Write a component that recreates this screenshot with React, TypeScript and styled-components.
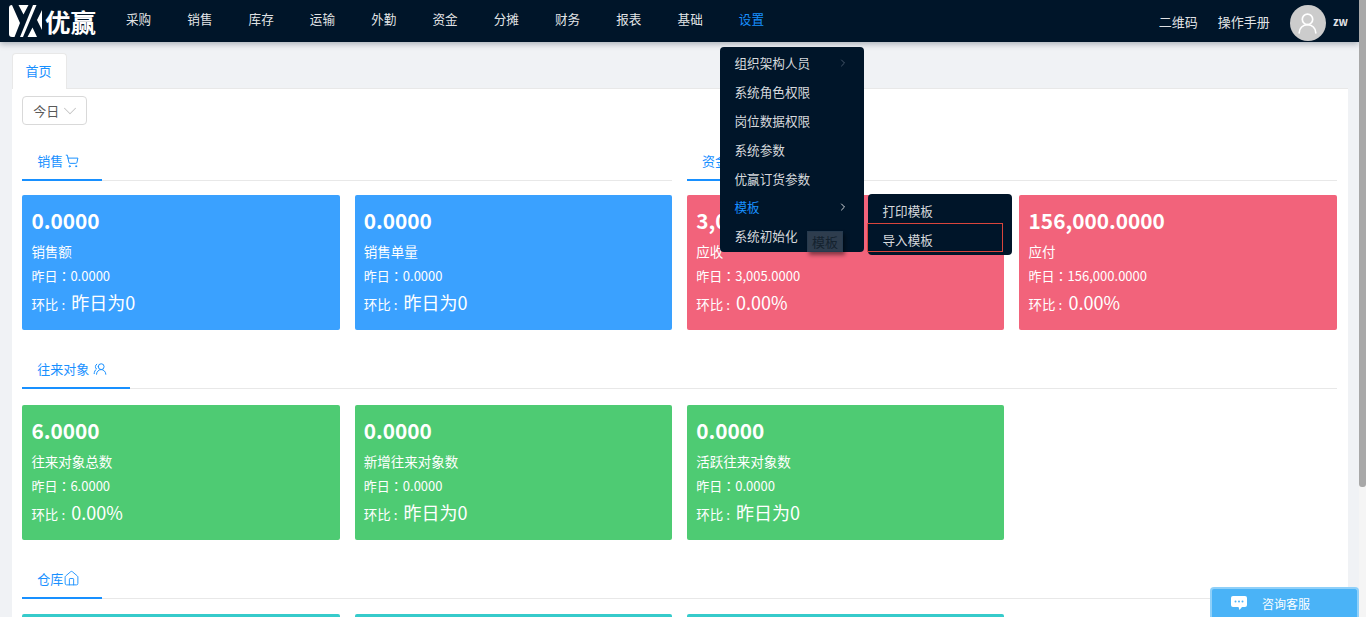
import React from 'react';
import styled, { createGlobalStyle } from 'styled-components';
import { ChevronDown, ChevronRight, House, ShoppingCart, UserRound, UsersRound } from 'lucide-react';

const GlobalStyle = createGlobalStyle`
	html, body, #root {
		margin: 0;
		height: 100%;
		overflow: hidden;
	}
	body {
		font-family: "Noto Sans CJK SC", "Noto Sans", sans-serif;
		font-size: 13px;
		color: #595959;
	}
`;

const navItems = ['采购', '销售', '库存', '运输', '外勤', '资金', '分摊', '财务', '报表', '基础', '设置'];
const menuItems = ['组织架构人员', '系统角色权限', '岗位数据权限', '系统参数', '优赢订货参数', '模板', '系统初始化'];

type Tone = 'blue' | 'red' | 'green' | 'teal';

interface Stat {
	value?: string;
	label?: string;
	yesterday?: string;
	ratio?: string;
}

const salesStats: Stat[] = [
	{ value: '0.0000', label: '销售额', yesterday: '0.0000', ratio: '昨日为0' },
	{ value: '0.0000', label: '销售单量', yesterday: '0.0000', ratio: '昨日为0' },
];
const fundStats: Stat[] = [
	{ value: '3,005.0000', label: '应收', yesterday: '3,005.0000', ratio: '0.00%' },
	{ value: '156,000.0000', label: '应付', yesterday: '156,000.0000', ratio: '0.00%' },
];
const partnerStats: Stat[] = [
	{ value: '6.0000', label: '往来对象总数', yesterday: '6.0000', ratio: '0.00%' },
	{ value: '0.0000', label: '新增往来对象数', yesterday: '0.0000', ratio: '昨日为0' },
	{ value: '0.0000', label: '活跃往来对象数', yesterday: '0.0000', ratio: '昨日为0' },
];
const toneColors: Record<Tone, string> = {
	blue: '#3aa1ff',
	red: '#f2637b',
	green: '#4ecb73',
	teal: '#36cbcb',
};

function StatCard({ stat, tone }: { stat: Stat; tone: Tone }) {
	return (
		<Card $tone={tone}>
			{stat.value && (
				<>
					<CardValue>{stat.value}</CardValue>
					<CardLabel>{stat.label}</CardLabel>
					<CardLine>昨日：{stat.yesterday}</CardLine>
					<CardRatio>
						环比 : <span>{stat.ratio}</span>
					</CardRatio>
				</>
			)}
		</Card>
	);
}

function Section({ title, icon, stats, tone, half }: {
	title: string;
	icon: React.ReactNode;
	stats: Stat[];
	tone: Tone;
	half?: boolean;
}) {
	return (
		<SectionBox $half={half}>
			<SectionHead>
				<SectionTitle>
					{title}
					{icon}
				</SectionTitle>
			</SectionHead>
			<CardGrid $half={half}>
				{stats.map((stat, i) => (
					<StatCard key={i} stat={stat} tone={tone} />
				))}
			</CardGrid>
		</SectionBox>
	);
}

export default function App() {
	return (
		<Shell>
			<GlobalStyle />
			<Page>
				<Header>
					<Logo>
						<svg width="33" height="32" viewBox="0 0 33 32">
							<rect width="33" height="32" rx="3" fill="#fff" />
							<path fill="#001529" d="M3 0h6.500l5 9.500L19.500 0H24L11 32H5.500l5.500-14z" />
							<path fill="#001529" d="M27.500 0H33v5l-5 10 5 10v7h-5l-4.500-9.500L18.500 32H14z" />
						</svg>
						<LogoText>优赢</LogoText>
					</Logo>
					<Nav>
						{navItems.map((item) => (
							<NavItem key={item} $active={item === '设置'}>{item}</NavItem>
						))}
					</Nav>
					<HeaderRight>
						<HeaderLink>二维码</HeaderLink>
						<HeaderLink>操作手册</HeaderLink>
						<Avatar>
							<UserRound size={25} strokeWidth={1.6} color="#fff" />
						</Avatar>
						<UserName>zw</UserName>
					</HeaderRight>
				</Header>

				<Content>
					<TabBar>
						<Tab>首页</Tab>
					</TabBar>
					<Panel>
						<DateSelect>
							今日
							<SelectArrow size={22} strokeWidth={1.1} />
						</DateSelect>
						<Board>
							<Section half title="销售" icon={<ShoppingCart size={14} strokeWidth={1.7} />} stats={salesStats} tone="blue" />
							<Section half title="资金" icon={<ShoppingCart size={14} strokeWidth={1.7} />} stats={fundStats} tone="red" />
							<Section title="往来对象" icon={<UsersIcon size={14} strokeWidth={1.7} />} stats={partnerStats} tone="green" />
							<Section title="仓库" icon={<HouseIcon size={17} strokeWidth={1.3} />} stats={[{}, {}, {}]} tone="teal" />
						</Board>
					</Panel>
				</Content>

				<Menu>
					{menuItems.map((item) => (
						<MenuItem key={item} $active={item === '模板'}>
							{item}
							{item === '组织架构人员' && <ChevronRight size={12} color="#46566a" />}
							{item === '模板' && <ChevronRight size={12} color="#d5d8dc" />}
						</MenuItem>
					))}
					<Tooltip>模板</Tooltip>
				</Menu>
				<SubMenu>
					<MenuItem>打印模板</MenuItem>
					<MenuItem>导入模板</MenuItem>
					<Outline />
				</SubMenu>

				<ChatButton>
					<svg width="16" height="14" viewBox="0 0 16 14">
						<path fill="#fff" d="M2 0h12a2 2 0 0 1 2 2v7a2 2 0 0 1-2 2h-3l-2.500 3-1-3H2a2 2 0 0 1-2-2V2a2 2 0 0 1 2-2z" />
						<circle cx="4.500" cy="5.500" r="1" fill="#4ab3f7" />
						<circle cx="8" cy="5.500" r="1" fill="#4ab3f7" />
						<circle cx="11.500" cy="5.500" r="1" fill="#4ab3f7" />
					</svg>
					<span>咨询客服</span>
				</ChatButton>
			</Page>
			<ScrollRail>
				<ScrollThumb />
			</ScrollRail>
		</Shell>
	);
}

const Shell = styled.div`
	display: flex;
	height: 100%;
	overflow: hidden;
`;

const Page = styled.div`
	position: relative;
	flex: 1;
	min-width: 0;
	height: 100%;
	overflow: hidden;
	background: #f0f2f5;
`;

const ScrollRail = styled.div`
	flex: 0 0 7px;
	background: #f5f5f5;
`;

const ScrollThumb = styled.div`
	height: 487px;
	background: #a8a8a8;
	border-radius: 0 0 3px 3px;
`;

const Header = styled.header`
	position: relative;
	z-index: 2;
	display: flex;
	align-items: center;
	height: 42px;
	padding-left: 9px;
	background: #001529;
	box-shadow: 0 2px 6px rgba(0, 21, 41, 0.3);
	color: rgba(255, 255, 255, 0.9);
`;

const Logo = styled.div`
	display: flex;
	align-items: center;
	gap: 3px;
	width: 117px;
	flex: none;
`;

const LogoText = styled.span`
	font-size: 25.5px;
	line-height: 32px;
	font-weight: 700;
	color: #fff;
	white-space: nowrap;
`;

const Nav = styled.nav`
	display: flex;
	gap: 36.1px;
	font-size: 12.6px;
`;

const NavItem = styled.span<{ $active?: boolean }>`
	line-height: 38px;
	margin-top: -4px;
	color: ${(p) => (p.$active ? '#1890ff' : 'rgba(255, 255, 255, 0.9)')};
`;

const HeaderRight = styled.div`
	display: flex;
	align-items: center;
	margin-left: auto;
	padding-right: 11px;
`;

const HeaderLink = styled.span`
	margin-right: 20px;
`;

const Avatar = styled.div`
	display: flex;
	align-items: center;
	justify-content: center;
	width: 36px;
	height: 36px;
	margin-top: 4px;
	border-radius: 50%;
	background: #ccc;
`;

const UserName = styled.span`
	margin-left: 7px;
	font-size: 11px;
	font-weight: 700;
`;

const Content = styled.main`
	padding: 11px 11px 0 12px;
`;

const TabBar = styled.div`
	display: flex;
	height: 36px;
	border-bottom: 1px solid #e8e8e8;
	box-sizing: border-box;
`;

const Tab = styled.div`
	width: 55px;
	height: 36px;
	box-sizing: border-box;
	padding-right: 2px;
	border: 1px solid #e8e8e8;
	border-bottom: none;
	border-radius: 4px 4px 0 0;
	background: #fff;
	color: #1890ff;
	text-align: center;
	line-height: 33px;
`;

const Panel = styled.div`
	padding: 7px 11.2px 32px 10.2px;
	background: #fff;
`;

const DateSelect = styled.div`
	display: flex;
	align-items: center;
	width: 65px;
	height: 29px;
	box-sizing: border-box;
	padding-left: 10px;
	border: 1px solid #d9d9d9;
	border-radius: 4px;
`;

const SelectArrow = styled(ChevronDown)`
	margin: 0 -5px 0 0;
	color: #c4c4c4;
`;

const Board = styled.div`
	display: grid;
	grid-template-columns: repeat(2, 1fr);
	column-gap: 15px;
	row-gap: 24px;
	margin-top: 21px;
`;

const SectionBox = styled.section<{ $half?: boolean }>`
	grid-column: ${(p) => (p.$half ? 'span 1' : 'span 2')};
	min-width: 0;
`;

const SectionHead = styled.div`
	display: flex;
	height: 35px;
	box-sizing: border-box;
	border-bottom: 1px solid #e8e8e8;
`;

const SectionTitle = styled.div`
	display: flex;
	align-items: center;
	height: 35px;
	box-sizing: border-box;
	padding: 0 23px 4px 15px;
	border-bottom: 2px solid #1890ff;
	color: #1890ff;
	svg {
		margin-left: 2px;
	}
`;

const UsersIcon = styled(UsersRound)`
	&& {
		margin-left: 4px;
		transform: scaleX(-1);
	}
`;

const HouseIcon = styled(House)`
	&& {
		margin: 0 -1px 0 0;
	}
`;

const CardGrid = styled.div<{ $half?: boolean }>`
	display: grid;
	grid-template-columns: repeat(${(p) => (p.$half ? 2 : 4)}, 1fr);
	gap: 15px;
	margin-top: ${(p) => (p.$half ? '14px' : '15.5px')};
`;

const Card = styled.div<{ $tone: Tone }>`
	height: 135px;
	box-sizing: border-box;
	padding: 9px 10px 0 9.2px;
	border-radius: 2px;
	background: ${(p) => toneColors[p.$tone]};
	color: #fff;
	font-size: 13.5px;
	white-space: nowrap;
	overflow: hidden;
`;

const CardValue = styled.div`
	font-size: 20.8px;
	font-weight: 700;
	line-height: 32px;
`;

const CardLabel = styled.div`
	margin-top: 2px;
	line-height: 26px;
`;

const CardLine = styled.div`
	margin-top: 1px;
	font-family: "Noto Sans CJK TC", "Noto Sans", sans-serif;
	font-size: 13px;
	line-height: 22px;
`;

const CardRatio = styled.div`
	line-height: 30px;
	span {
		margin-left: 3px;
		font-size: 18px;
	}
`;

const Menu = styled.div`
	position: absolute;
	z-index: 3;
	top: 47px;
	left: 720px;
	width: 144px;
	padding: 1.500px 0 2px;
	border-radius: 4px;
	background: #001529;
	box-sizing: border-box;
`;

const MenuItem = styled.div<{ $active?: boolean }>`
	display: flex;
	align-items: center;
	justify-content: space-between;
	height: 28.8px;
	padding: 0 15px 0 14.500px;
	font-size: 12.6px;
	color: ${(p) => (p.$active ? '#1890ff' : 'rgba(255, 255, 255, 0.85)')};
`;

const Tooltip = styled.div`
	position: absolute;
	left: 87px;
	top: 184px;
	width: 36px;
	height: 21px;
	box-sizing: border-box;
	border: 1px solid #263a4e;
	background: #2e3d4e;
	color: #14222f;
	text-align: center;
	line-height: 19px;
	box-shadow: 2px 3px 4px rgba(0, 0, 0, 0.45);
`;

const SubMenu = styled.div`
	position: absolute;
	z-index: 3;
	top: 194px;
	left: 868px;
	width: 144px;
	padding: 2px 0 1.500px;
	border-radius: 4px;
	background: #001529;
	box-sizing: border-box;
`;

const Outline = styled.div`
	position: absolute;
	top: 29px;
	left: -1px;
	width: 136px;
	height: 29px;
	box-sizing: border-box;
	border: 1px solid #d9453c;
`;

const ChatButton = styled.div`
	position: absolute;
	z-index: 3;
	left: 1210px;
	top: 587px;
	display: flex;
	align-items: center;
	gap: 15px;
	width: 149px;
	height: 40px;
	box-sizing: border-box;
	padding: 0 0 10px 19px;
	border: 2px solid #8fd0f9;
	border-bottom: none;
	border-radius: 4px 4px 0 0;
	background: #4ab3f7;
	color: #fff;
	font-size: 12px;
`;
